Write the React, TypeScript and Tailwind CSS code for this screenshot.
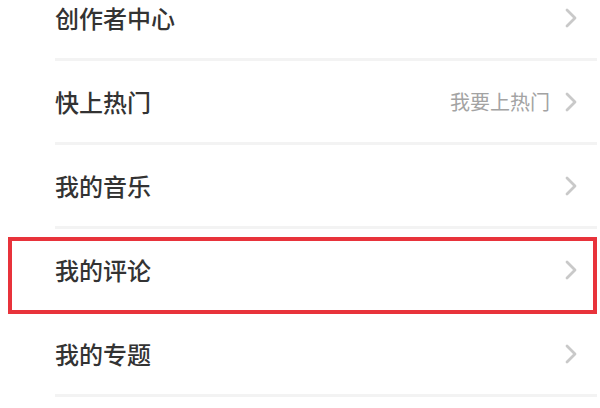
import React from 'react';

interface Row {
  title: string;
  extra?: string;
  highlighted?: boolean;
}

const rows: Row[] = [
  { title: '创作者中心' },
  { title: '快上热门', extra: '我要上热门' },
  { title: '我的音乐' },
  { title: '我的评论', highlighted: true },
  { title: '我的专题' },
];

const Chevron = () => (
  <svg width="14" height="22" viewBox="0 0 14 22" fill="none" className="shrink-0">
    <path d="M3 3 L11 11 L3 19" stroke="#c9c9c9" strokeWidth="2.8" strokeLinecap="round" strokeLinejoin="round" />
  </svg>
);

export default function App() {
  return (
    <div
      className="w-[600px] h-[408px] overflow-hidden bg-white"
      style={{ fontFamily: '"Noto Sans CJK SC", "Noto Sans", sans-serif' }}
    >
      <div className="-mt-[23px]">
        {rows.map((row, i) => (
          <div key={i} className="relative h-[84px] flex items-stretch">
            <div className="flex-1 ml-[55px] mr-[3px] flex items-center border-b-[3px] border-[#f3f3f3]">
              <span className="text-[24px] font-medium text-[#333333] leading-none">{row.title}</span>
              <div className="ml-auto mr-[19px] flex items-center gap-[14px]">
                {row.extra && <span className="text-[20px] text-[#a3a3a3] leading-none">{row.extra}</span>}
                <Chevron />
              </div>
            </div>
            {row.highlighted && (
              <div className="absolute left-[8px] right-[3px] top-[8px] bottom-[-1px] border-[4px] border-[#e8333b]" />
            )}
          </div>
        ))}
      </div>
    </div>
  );
}
